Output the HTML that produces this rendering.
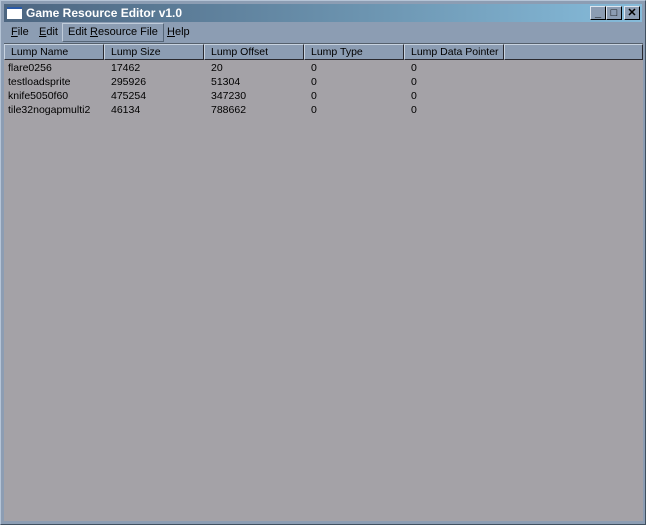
<!DOCTYPE html><html><head><style>
body{margin:0;width:646px;height:525px;background:#8ea2bb;font-family:"Liberation Sans",sans-serif;font-size:11px;position:relative;overflow:hidden}
.win{position:absolute;left:0;top:0;width:644px;height:523px;border:1px solid #b5c4d6;border-right-color:#405060;border-bottom-color:#405060;background:#8c9db3}
.title{position:absolute;left:3px;top:3px;width:638px;height:18px;background:linear-gradient(90deg,#4c6580,#6e97b3 60%,#86bcdb)}
.title .ic{position:absolute;left:3px;top:3px;width:15px;height:12px;background:#fff;border-top:2px solid #2a5aa8;box-sizing:border-box}
.title .t{position:absolute;left:22px;top:2px;color:#fff;font-weight:bold;font-size:12px}
.btn{position:absolute;top:2px;width:16px;height:14px;background:#8c9db3;border:1px solid #dde5ee;border-right-color:#000;border-bottom-color:#000;box-sizing:border-box;font-size:11px;text-align:center;line-height:12px;font-weight:bold}
.menu{position:absolute;left:3px;top:22px;height:19px;width:638px}
.menu span{position:absolute;top:3px}
.menu .sel{top:0;left:58px;height:17px;padding:0 5px;border:1px solid #c0ccda;border-right-color:#556577;border-bottom-color:#556577;line-height:17px}
.list{position:absolute;left:3px;top:42px;width:639px;height:477px;background:#a4a2a7;border-top:1px solid #55606c;font-size:10.5px}
.hdr{position:absolute;top:0;height:16px;background:#8c9db3;border:1px solid #c8d3e0;border-right-color:#2a2a30;border-bottom-color:#2a2a30;box-sizing:border-box;padding-left:6px;line-height:14px;white-space:nowrap}
.row{position:absolute;left:0;height:14px;line-height:14px}
.row span{position:absolute;white-space:nowrap}
</style></head><body><div class="win">
<div class="title"><div class="ic"></div><div class="t">Game Resource Editor v1.0</div>
<div class="btn" style="left:586px">_</div><div class="btn" style="left:602px">□</div><div class="btn" style="left:620px">✕</div></div>
<div class="menu"><span style="left:7px"><u>F</u>ile</span><span style="left:35px"><u>E</u>dit</span><span class="sel">Edit <u>R</u>esource File</span><span style="left:163px"><u>H</u>elp</span></div>
<div class="list">
<div class="hdr" style="left:0;width:100px">Lump Name</div>
<div class="hdr" style="left:100px;width:100px">Lump Size</div>
<div class="hdr" style="left:200px;width:100px">Lump Offset</div>
<div class="hdr" style="left:300px;width:100px">Lump Type</div>
<div class="hdr" style="left:400px;width:100px">Lump Data Pointer</div>
<div class="hdr" style="left:500px;width:139px"></div>
<div class="row" style="top:17px"><span style="left:4px">flare0256</span><span style="left:107px">17462</span><span style="left:207px">20</span><span style="left:307px">0</span><span style="left:407px">0</span></div>
<div class="row" style="top:31px"><span style="left:4px">testloadsprite</span><span style="left:107px">295926</span><span style="left:207px">51304</span><span style="left:307px">0</span><span style="left:407px">0</span></div>
<div class="row" style="top:45px"><span style="left:4px">knife5050f60</span><span style="left:107px">475254</span><span style="left:207px">347230</span><span style="left:307px">0</span><span style="left:407px">0</span></div>
<div class="row" style="top:59px"><span style="left:4px">tile32nogapmulti2</span><span style="left:107px">46134</span><span style="left:207px">788662</span><span style="left:307px">0</span><span style="left:407px">0</span></div>
</div></div></body></html>
